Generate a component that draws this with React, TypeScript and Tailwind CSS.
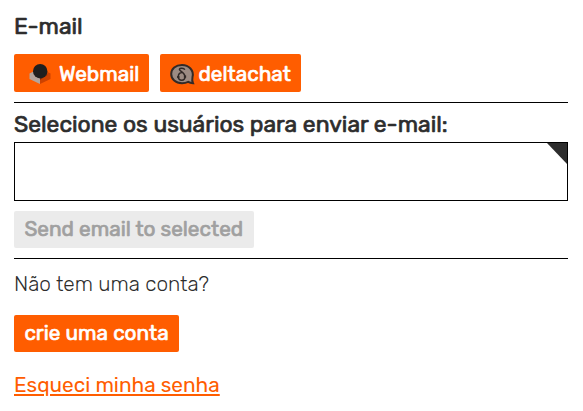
import type { ReactNode } from "react";

function WebmailIcon() {
  return (
    <svg width="22" height="22" viewBox="0 0 22 22" aria-hidden="true">
      <path d="M0.5 10.500 4.500 8.500 11 13V21L0.5 16Z" fill="#b3a49d" />
      <path d="M21.500 10.500 17.500 8.500 11 13V21L21.500 16Z" fill="#cd4200" />
      <path d="M11 15.500 17.600 11 18.500 12 11 17Z" fill="#8e3207" />
      <circle cx="11.2" cy="8.200" r="7.2" fill="#1f1f1f" />
    </svg>
  );
}

function DeltaChatIcon() {
  return (
    <svg width="25" height="22" viewBox="0 -0.8 25 22" aria-hidden="true">
      <path
        d="M12 1.2C5.6 1.2 1.2 4.9 1.2 10.200s4.400 9.200 10.800 9.200c2.300 0 4.300-.4 6.200-1.300 1.200.8 2.700 1.300 4.800 1.300-.9-1.700-1-3.800-.5-6.200C24.200 6.600 18.800 1.200 12 1.200Z"
        fill="#9c8b83"
        stroke="#332a27"
        strokeWidth="2"
      />
      <path
        d="M14.800 6C14 4.300 9.400 3.900 9.400 5.700c0 1.500 5.600 3.300 5.600 7.300 0 2.200-1.300 3.400-3.300 3.400s-3.400-1.400-3.400-3.700c0-2.400 1.500-3.800 3.600-4.100"
        fill="none"
        stroke="#302826"
        strokeWidth="1.500"
      />
      <path d="M8.300 12.100v2M15 11.600v2.300" stroke="#302826" strokeWidth="2.300" />
    </svg>
  );
}

function Button({ className, children }: { className: string; children: ReactNode }) {
  return (
    <button type="button" className={`flex items-center whitespace-nowrap rounded-[2px] bg-[#ff5d00] text-white [-webkit-text-stroke:0.7px] ${className}`}>
      {children}
    </button>
  );
}

export default function App() {
  return (
    <main className="flex h-[411px] w-[583px] flex-col bg-white pr-[15px] pl-[14px] pt-3 font-['Rubik',Roboto,sans-serif] text-[20.8px] text-[#2d2d2d]">
      <h2 className="h-7 text-[22.88px] leading-[29px] [-webkit-text-stroke:0.7px]">E-mail</h2>
      <div className="mt-[14px] flex gap-[11px]">
        <Button className="h-[38px] w-[135px] gap-[8px] pt-[2px] pl-[15px]">
          <WebmailIcon />
          <span className="leading-7">Webmail</span>
        </Button>
        <Button className="h-[38px] w-[141px] gap-[3.500px] pt-[2px] pl-[10px]">
          <DeltaChatIcon />
          <span className="leading-7">deltachat</span>
        </Button>
      </div>
      <hr className="mt-[10px] border-black" />
      <label htmlFor="users" className="mt-[7px] h-8 whitespace-nowrap text-[22.88px] leading-[30px] [-webkit-text-stroke:0.7px]">
        Selecione os usuários para enviar e-mail:
      </label>
      <div id="users" className="flex h-[59px] w-[554px] justify-end border border-black">
        <div className="h-[21px] w-[20px] bg-[#2d2d2d] [clip-path:polygon(0_0,100%_0,100%_100%)]" />
      </div>
      <button type="button" disabled className="mt-[10px] flex h-[37px] w-[240px] items-center whitespace-nowrap rounded-[2px] bg-[#ebebeb] pl-[10.400px] text-[#a0a0a0] [-webkit-text-stroke:0.7px]">
        <span>Send email to selected</span>
      </button>
      <hr className="mt-[10px] border-black" />
      <p className="mt-[10px] h-[30px] leading-[30px] font-light"><span>Não tem uma conta?</span></p>
      <Button className="mt-[16px] h-[37px] w-[165px] pl-[10.400px]"><span>crie uma conta</span></Button>
      <a href="#" className="mt-[18px] w-fit leading-[30px] text-[#ff5d00] underline decoration-2 underline-offset-[2px]">Esqueci minha senha</a>
    </main>
  );
}
